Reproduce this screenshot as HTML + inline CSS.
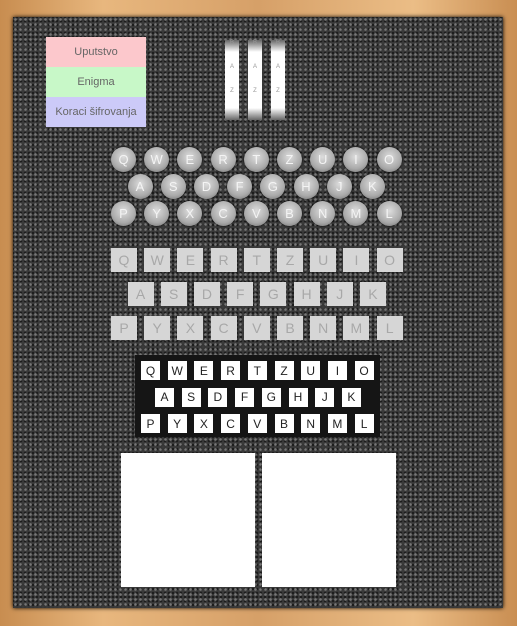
<!DOCTYPE html><html><head><style>
body{margin:0;width:517px;height:626px;background:#d9a56b;position:relative;overflow:hidden;font-family:"Liberation Sans",sans-serif}
#wood{position:absolute;inset:0;background:linear-gradient(90deg,#c88d50,#e8b77e 20%,#d6a068 50%,#ebbd86 80%,#c98e52)}
#panel{position:absolute;left:13px;top:17px;width:490px;height:591px;background:#3a3a3a;background-image:radial-gradient(#777 1px,transparent 1.6px),radial-gradient(#1c1c1c 1px,transparent 1.5px);background-size:5px 5px,4px 4px;background-position:0 0,2px 2px;box-shadow:0 0 4px #000}
.btn{position:absolute;left:46px;width:100px;height:30px;font-size:11px;color:#666;display:flex;align-items:center;justify-content:center}
.rot{position:absolute;top:40px;width:14px;height:80px;background:linear-gradient(#666,#fff 15%,#fff 85%,#666);font-size:6px;color:#999;text-align:center}
.l{position:absolute;width:25px;height:25px;border-radius:50%;background:radial-gradient(circle at 50% 40%,#ddd,#aaa 60%,#666);color:#f4f4f4;font-size:13px;display:flex;align-items:center;justify-content:center;box-shadow:0 0 2px #000}
.g{position:absolute;width:26px;height:24px;background:#d6d6d6;color:#a8a8a8;font-size:14px;display:flex;align-items:center;justify-content:center}
.w{position:absolute;width:19px;height:19px;background:#fff;color:#222;font-size:12px;display:flex;align-items:center;justify-content:center}
.box{position:absolute;top:453px;width:134px;height:134px;background:#fff}
</style></head><body><div id="wood"></div><div id="panel"></div>
<div class="btn" style="top:37px;background:#fcc8cc">Uputstvo</div>
<div class="btn" style="top:67px;background:#c8f8c8">Enigma</div>
<div class="btn" style="top:97px;background:#cccaf8">Koraci šifrovanja</div>
<div class="rot" style="left:225px">B<br><br><br><br>A<br><br><br><br>Z</div>
<div class="rot" style="left:248px">B<br><br><br><br>A<br><br><br><br>Z</div>
<div class="rot" style="left:271px">B<br><br><br><br>A<br><br><br><br>Z</div>
<div style="position:absolute;inset:0" id="k"></div>
<div style="position:absolute;left:135px;top:355px;width:245px;height:82px;background:#151515"></div>
<div class="box" style="left:121px"></div><div class="box" style="left:262px"></div>
<script>
var rows=["QWERTZUIO","ASDFGHJK","PYXCVBNML"],h="";
rows.forEach(function(r,i){var off=i==1?16.5:0;for(var j=0;j<r.length;j++){var c=r[j];
h+='<div class="l" style="left:'+(111+off+j*33.2)+'px;top:'+(147+i*27)+'px">'+c+'</div>';
h+='<div class="g" style="left:'+(111+off+j*33.2)+'px;top:'+(248+i*34)+'px">'+c+'</div>';
var woff=i==1?14:0;h+='<div class="w" style="left:'+(141+woff+j*26.7)+'px;top:'+(361+i*26.5)+'px">'+c+'</div>';}});
document.getElementById('k').innerHTML=h;
var k=document.getElementById('k');document.body.appendChild(k);
document.querySelectorAll('.w').forEach(function(e){document.body.appendChild(e)});
</script>
</body></html>
